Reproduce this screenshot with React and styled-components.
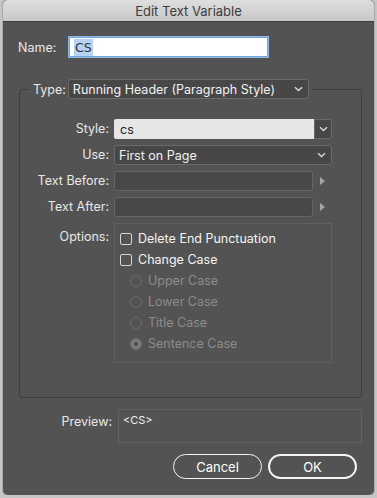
import React from "react"
import styled, { createGlobalStyle } from "styled-components"

const GlobalStyle = createGlobalStyle`
  html, body {
    margin: 0;
    padding: 0;
    background: #c6c6c6;
  }
  body {
    font-family: Inter, "Open Sans", "Liberation Sans", sans-serif;
    -webkit-font-smoothing: antialiased;
  }
`

const Window = styled.div`
  width: 371px;
  height: 495px;
  margin-left: 3px;
  background: #535353;
  border-radius: 5px;
  overflow: hidden;
  display: flex;
  flex-direction: column;
  box-shadow: 0 0 0 1px rgba(0, 0, 0, 0.15);
`

const TitleBar = styled.div`
  height: 21px;
  flex: none;
  display: flex;
  align-items: center;
  justify-content: center;
  background: linear-gradient(#dedede, #c8c8c8);
  border-bottom: 1px solid #3c3c3c;
  color: #3c3c3c;
  font-size: 13px;
`

const Body = styled.div`
  flex: 1;
  display: flex;
  flex-direction: column;
  padding: 15px 17px 0 15px;
  color: #e8e8e8;
  font-size: 12.5px;
`

const NameRow = styled.div`
  display: flex;
  align-items: center;
  height: 20px;
`

const NameLabel = styled.span`
  width: 51px;
`

const NameInput = styled.div`
  width: 199px;
  height: 20px;
  box-sizing: border-box;
  background: #fff;
  border: 1px solid #79a6d8;
  box-shadow: 0 0 0 1px #8fb8e3;
  display: flex;
  align-items: center;
  padding-left: 4px;
  color: #333;
  font-family: "DejaVu Sans", sans-serif;
  font-size: 12.5px;
`

const Selected = styled.span`
  background: #b5d3f5;
  padding: 1px 1px;
`

const Group = styled.fieldset`
  margin: 22px -5px 0 1px;
  padding: 20px 0 34px 0;
  border: 1px solid #3e3e3e;
  border-radius: 3px;
  min-width: 0;
`

const Legend = styled.legend`
  margin-left: 9px;
  padding: 0 4px 0 4px;
  display: flex;
  align-items: center;
  gap: 2px;
  height: 20px;
`

const Select = styled.div`
  width: ${p => p.$w}px;
  height: 20px;
  box-sizing: border-box;
  display: flex;
  align-items: center;
  justify-content: space-between;
  padding: 0 5px 0 4px;
  background: #474747;
  border: 1px solid #6a6a6a;
  border-radius: 3px;
  color: #f2f2f2;
`

const Grid = styled.div`
  display: grid;
  grid-template-columns: 89px 218px;
  column-gap: 5px;
  row-gap: 6px;
`

const Label = styled.span`
  text-align: right;
  line-height: 20px;
  white-space: nowrap;
  color: #e8e8e8;
`

const Combo = styled.div`
  display: flex;
  height: 20px;
`

const ComboField = styled.div`
  flex: 1;
  background: #e6e6e6;
  color: #222;
  display: flex;
  align-items: center;
  padding-left: 6px;
  border-radius: 2px 0 0 2px;
`

const ComboButton = styled.div`
  width: 18px;
  box-sizing: border-box;
  background: #474747;
  border: 1px solid #6a6a6a;
  border-radius: 0 3px 3px 0;
  display: flex;
  align-items: center;
  justify-content: center;
`

const FieldRow = styled.div`
  display: flex;
  align-items: center;
  height: 20px;
`

const TextField = styled.div`
  width: 199px;
  height: 20px;
  box-sizing: border-box;
  background: #484848;
  border: 1px solid #666;
  border-radius: 3px;
`

const Arrow = styled.div`
  margin-left: 7px;
  width: 0;
  height: 0;
  border-top: 4px solid transparent;
  border-bottom: 4px solid transparent;
  border-left: 5px solid #a5a5a5;
`

const OptionsLabel = styled(Label)`
  line-height: 1;
  padding-top: 8px;
`

const OptionsBox = styled.div`
  height: 140px;
  box-sizing: border-box;
  border: 1px solid #606060;
  padding: 4px 0 0 5px;
  display: flex;
  flex-direction: column;
`

const Option = styled.div`
  display: flex;
  align-items: center;
  height: 21px;
  gap: 6px;
  padding-left: ${p => (p.$indent ? 10 : 0)}px;
  color: ${p => (p.$disabled ? "#8c8c8c" : "#f4f4f4")};
`

const Check = styled.span`
  width: 12px;
  height: 12px;
  box-sizing: border-box;
  border: 1px solid #d6d6d6;
  border-radius: 2px;
`

const Radio = styled.span`
  width: 12px;
  height: 12px;
  box-sizing: border-box;
  border-radius: 50%;
  border: 1px solid #6c6c6c;
  background: ${p => (p.$on ? "#7a7a7a" : "transparent")};
  display: flex;
  align-items: center;
  justify-content: center;
  &::after {
    content: "";
    width: 4px;
    height: 4px;
    border-radius: 50%;
    background: ${p => (p.$on ? "#4a4a4a" : "transparent")};
  }
`

const PreviewRow = styled.div`
  display: flex;
  margin-top: 11px;
  margin-right: -5px;
`

const PreviewLabel = styled.span`
  width: 94px;
  text-align: right;
  padding-top: 5px;
  margin-right: 6px;
`

const PreviewBox = styled.div`
  flex: 1;
  height: 34px;
  box-sizing: border-box;
  border: 1px solid #616161;
  padding: 3px 4px;
  font-size: 11px;
  color: #f0f0f0;
`

const Buttons = styled.div`
  display: flex;
  justify-content: flex-end;
  gap: 6px;
  margin-top: 11px;
`

const Button = styled.div`
  width: 89px;
  height: 25px;
  box-sizing: border-box;
  border: ${p => (p.$primary ? 2 : 1.5)}px solid #f4f4f4;
  border-radius: 13px;
  display: flex;
  align-items: center;
  justify-content: center;
  color: #fff;
  font-size: 13px;
`

const Chevron = () => (
  <svg width="9" height="6" viewBox="0 0 9 6">
    <path d="M1 1.2 L4.5 4.5 L8 1.2" fill="none" stroke="#dcdcdc" strokeWidth="1.3" />
  </svg>
)

export default function App() {
  return (
    <>
      <GlobalStyle />
      <Window>
        <TitleBar>Edit Text Variable</TitleBar>
        <Body>
          <NameRow>
            <NameLabel>Name:</NameLabel>
            <NameInput>
              <Selected>CS</Selected>
            </NameInput>
          </NameRow>

          <Group>
            <Legend>
              <span>Type:</span>
              <Select $w={241}>
                <span>Running Header (Paragraph Style)</span>
                <Chevron />
              </Select>
            </Legend>

            <Grid>
              <Label>Style:</Label>
              <Combo>
                <ComboField>cs</ComboField>
                <ComboButton>
                  <Chevron />
                </ComboButton>
              </Combo>

              <Label>Use:</Label>
              <Select $w={218}>
                <span>First on Page</span>
                <Chevron />
              </Select>

              <Label>Text Before:</Label>
              <FieldRow>
                <TextField />
                <Arrow />
              </FieldRow>

              <Label>Text After:</Label>
              <FieldRow>
                <TextField />
                <Arrow />
              </FieldRow>

              <OptionsLabel>Options:</OptionsLabel>
              <OptionsBox>
                <Option>
                  <Check />
                  Delete End Punctuation
                </Option>
                <Option>
                  <Check />
                  Change Case
                </Option>
                <Option $indent $disabled>
                  <Radio />
                  Upper Case
                </Option>
                <Option $indent $disabled>
                  <Radio />
                  Lower Case
                </Option>
                <Option $indent $disabled>
                  <Radio />
                  Title Case
                </Option>
                <Option $indent $disabled>
                  <Radio $on />
                  Sentence Case
                </Option>
              </OptionsBox>
            </Grid>
          </Group>

          <PreviewRow>
            <PreviewLabel>Preview:</PreviewLabel>
            <PreviewBox>&lt;CS&gt;</PreviewBox>
          </PreviewRow>

          <Buttons>
            <Button>Cancel</Button>
            <Button $primary>OK</Button>
          </Buttons>
        </Body>
      </Window>
    </>
  )
}
